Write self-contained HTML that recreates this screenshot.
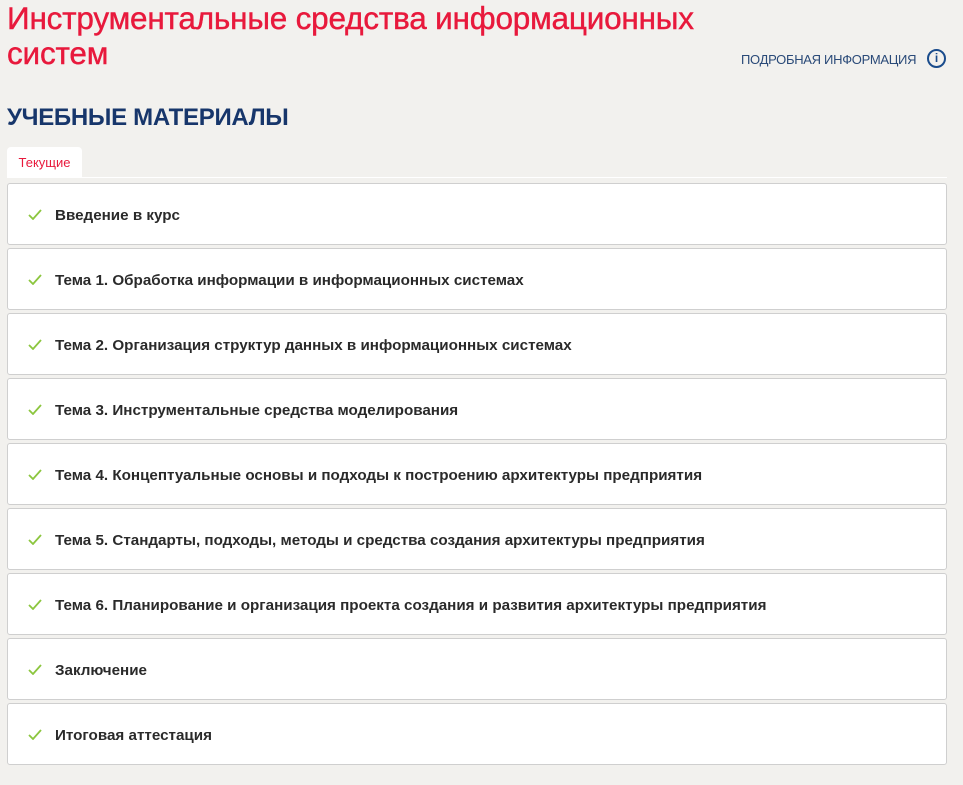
<!DOCTYPE html>
<html><head><meta charset="utf-8"><style>
body{margin:0;background:#f2f1ee;font-family:"Liberation Sans",sans-serif;width:963px;height:785px;overflow:hidden;position:relative}
h1{position:absolute;left:7px;top:1px;margin:0;font-size:31.5px;line-height:35px;color:#e8193c;font-weight:normal;width:720px;letter-spacing:-0.2px;-webkit-text-stroke:0.4px #e8193c}
.info{position:absolute;left:741px;top:52px;font-size:13px;color:#2a4a78;letter-spacing:-0.3px}
.icon{position:absolute;left:927px;top:49px;width:19px;height:19px;border:2px solid #1a4c8c;border-radius:50%;box-sizing:border-box;color:#1a4c8c;font-size:12px;font-weight:bold;text-align:center;line-height:15px}
h2{position:absolute;left:7px;top:104px;margin:0;font-size:24px;color:#17366b;font-weight:bold;letter-spacing:-0.3px}
.tab{position:absolute;left:7px;top:147px;width:75px;height:30px;background:#fff;border-radius:4px 4px 0 0;color:#e8193c;font-size:13px;text-align:center;line-height:31px}
.line{position:absolute;left:7px;top:177px;width:940px;height:1px;background:#fff}
.card{position:absolute;left:7px;width:938px;height:60px;background:#fff;border:1px solid #cfcfcf;border-radius:3px;font-size:15.2px;font-weight:bold;color:#2a2a2a;line-height:63px;box-sizing:content-box}
.card span{position:absolute;left:47px}
.card svg{position:absolute;left:20px;top:25px}
</style></head><body>
<h1>Инструментальные средства информационных систем</h1>
<div class="info">ПОДРОБНАЯ ИНФОРМАЦИЯ</div>
<div class="icon">i</div>
<h2>УЧЕБНЫЕ МАТЕРИАЛЫ</h2>
<div class="tab">Текущие</div>
<div class="line"></div>
<div class="card" style="top:183px"><svg width="14" height="11"><path d="M1 6l4 4 8-9" stroke="#8cc63f" stroke-width="1.8" fill="none"/></svg><span>Введение в курс</span></div>
<div class="card" style="top:248px"><svg width="14" height="11"><path d="M1 6l4 4 8-9" stroke="#8cc63f" stroke-width="1.8" fill="none"/></svg><span>Тема 1. Обработка информации в информационных системах</span></div>
<div class="card" style="top:313px"><svg width="14" height="11"><path d="M1 6l4 4 8-9" stroke="#8cc63f" stroke-width="1.8" fill="none"/></svg><span>Тема 2. Организация структур данных в информационных системах</span></div>
<div class="card" style="top:378px"><svg width="14" height="11"><path d="M1 6l4 4 8-9" stroke="#8cc63f" stroke-width="1.8" fill="none"/></svg><span>Тема 3. Инструментальные средства моделирования</span></div>
<div class="card" style="top:443px"><svg width="14" height="11"><path d="M1 6l4 4 8-9" stroke="#8cc63f" stroke-width="1.8" fill="none"/></svg><span>Тема 4. Концептуальные основы и подходы к построению архитектуры предприятия</span></div>
<div class="card" style="top:508px"><svg width="14" height="11"><path d="M1 6l4 4 8-9" stroke="#8cc63f" stroke-width="1.8" fill="none"/></svg><span>Тема 5. Стандарты, подходы, методы и средства создания архитектуры предприятия</span></div>
<div class="card" style="top:573px"><svg width="14" height="11"><path d="M1 6l4 4 8-9" stroke="#8cc63f" stroke-width="1.8" fill="none"/></svg><span>Тема 6. Планирование и организация проекта создания и развития архитектуры предприятия</span></div>
<div class="card" style="top:638px"><svg width="14" height="11"><path d="M1 6l4 4 8-9" stroke="#8cc63f" stroke-width="1.8" fill="none"/></svg><span>Заключение</span></div>
<div class="card" style="top:703px"><svg width="14" height="11"><path d="M1 6l4 4 8-9" stroke="#8cc63f" stroke-width="1.8" fill="none"/></svg><span>Итоговая аттестация</span></div>
</body></html>
